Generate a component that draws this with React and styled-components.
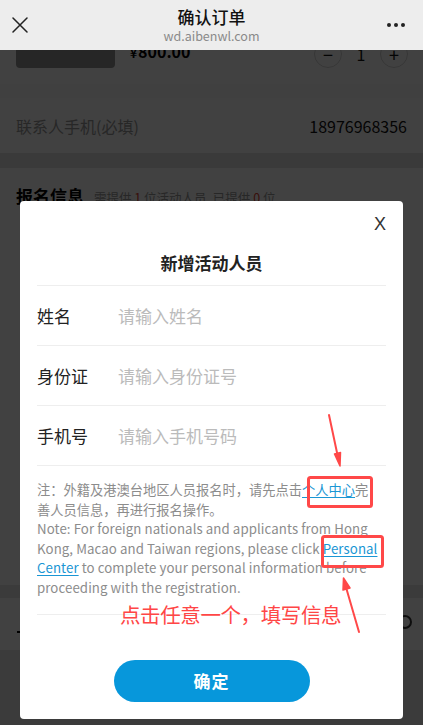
import React from "react";
import styled, { createGlobalStyle } from "styled-components";

const GlobalStyle = createGlobalStyle`
  html, body { margin: 0; padding: 0; background: #3e3e3e; }
  body { font-family: "Noto Sans CJK SC", "Noto Sans", sans-serif; }
  * { box-sizing: border-box; }
`;

const Screen = styled.div`
  position: relative;
  width: 423px;
  height: 725px;
  display: flex;
  flex-direction: column;
  overflow: hidden;
`;

const NavBar = styled.div`
  height: 50px;
  flex: none;
  background: #ededed;
  display: grid;
  grid-template-columns: 50px 1fr 50px;
  align-items: center;
`;

const NavIcon = styled.div`
  display: flex;
  align-items: center;
  justify-content: ${(p) => (p.$right ? "flex-end" : "flex-start")};
  padding: ${(p) => (p.$right ? "0 17px 0 0" : "0 0 0 12px")};
  color: #222;
`;

const NavTitle = styled.div`
  display: flex;
  flex-direction: column;
  align-items: center;
`;

const TitleText = styled.div`
  font-size: 17px;
  font-weight: 500;
  line-height: 20px;
  color: #111;
  margin-top: 1px;
`;

const UrlText = styled.div`
  font-size: 12.5px;
  line-height: 16px;
  color: #8a8a8a;
  margin-top: 1px;
`;

const Content = styled.div`
  position: relative;
  flex: 1;
  overflow: hidden;
  background: #e8e8e8;
`;

const Page = styled.div`
  margin-top: -50px;
  display: flex;
  flex-direction: column;
`;

const ProductRow = styled.div`
  background: #fff;
  display: flex;
  align-items: flex-end;
  gap: 15px;
  padding: 12px 15px 16px 16px;
`;

const ProductImage = styled.div`
  width: 99px;
  height: 56px;
  border-radius: 4px;
  background: #959595;
  flex: none;
`;

const ProductInfo = styled.div`
  flex: 1;
  display: flex;
  align-items: center;
  justify-content: space-between;
  height: 28px;
`;

const Price = styled.div`
  font-weight: 700;
  font-size: 16px;
  line-height: 20px;
  color: #000;
  align-self: flex-start;
  margin-top: 1px;
  span { font-size: 12px; margin-right: 1px; }
`;

const Stepper = styled.div`
  display: flex;
  align-items: center;
`;

const StepBtn = styled.div`
  width: 28px;
  height: 28px;
  border-radius: 50%;
  border: 1px solid #d5d5d5;
  display: flex;
  align-items: center;
  justify-content: center;
  color: #111;
  font-size: 18px;
  line-height: 1;
`;

const StepValue = styled.div`
  width: 38px;
  text-align: center;
  font-size: 16px;
  color: #111;
`;

const Spacer = styled.div`
  height: ${(p) => p.$h}px;
  background: ${(p) => p.$bg};
`;

const ContactRow = styled.div`
  background: #fff;
  height: 55px;
  display: flex;
  align-items: center;
  justify-content: space-between;
  padding: 0 16px;
  font-size: 16px;
`;

const MutedLabel = styled.span`
  color: #999;
`;

const Phone = styled.span`
  color: #111;
  font-size: 16px;
`;

const Section = styled.div`
  background: #fff;
  height: 417px;
  padding: 18px 16px;
`;

const SectionHead = styled.div`
  display: flex;
  align-items: baseline;
  gap: 10px;
  line-height: 20px;
`;

const SectionTitle = styled.span`
  font-size: 17px;
  font-weight: 700;
  color: #000;
`;

const SectionSub = styled.span`
  font-size: 12.5px;
  color: #999;
  em { font-style: normal; color: #e0412f; }
`;

const BottomRow = styled.div`
  background: #fff;
  height: 52px;
  display: flex;
  align-items: center;
  justify-content: space-between;
  padding: 0 11px 0 17px;
  color: #000;
`;

const Dash = styled.span`
  width: 4px;
  height: 2px;
  background: #000;
  margin-top: 16px;
`;

const RingIcon = styled.span`
  width: 14px;
  height: 14px;
  border-radius: 50%;
  border: 2px solid #333;
  margin-top: -4px;
`;

const Overlay = styled.div`
  position: absolute;
  inset: 0;
  background: rgba(0, 0, 0, 0.745);
  display: flex;
  justify-content: center;
  align-items: flex-start;
  padding-top: 151px;
`;

const Modal = styled.div`
  position: relative;
  width: 383px;
  background: #fff;
  border-radius: 4px;
  display: flex;
  flex-direction: column;
  padding: 0 17px 17px;
`;

const CloseBtn = styled.div`
  position: absolute;
  top: 12px;
  right: 17px;
  font-family: "Liberation Sans", Arial, sans-serif;
  font-size: 18px;
  color: #333;
  line-height: 22px;
`;

const ModalTitle = styled.div`
  padding: 50px 0 10px;
  text-align: center;
  font-size: 17px;
  font-weight: 700;
  color: #222;
  line-height: 24px;
  border-bottom: 1px solid #eee;
`;

const FieldRow = styled.div`
  height: 60px;
  display: flex;
  align-items: center;
  border-bottom: 1px solid #eee;
  font-size: 17px;
`;

const FieldLabel = styled.div`
  width: 81px;
  color: #222;
  flex: none;
`;

const FieldInput = styled.input`
  flex: 1;
  min-width: 0;
  border: none;
  outline: none;
  font: inherit;
  font-size: 17px;
  color: #222;
  padding: 0;
  background: transparent;
  &::placeholder { color: #bbb; }
`;

const Note = styled.div`
  padding: 14px 4px 16px 0;
  font-size: 13.25px;
  line-height: 19.6px;
  color: #8c8c8c;
  white-space: nowrap;
  border-bottom: 1px solid #eee;
`;

const EnText = styled.span`
  letter-spacing: 0.08px;
`;

const Link = styled.a`
  color: #1a96d4;
  text-decoration: underline;
  text-underline-offset: 2px;
`;

const ConfirmBtn = styled.button`
  align-self: center;
  margin-top: 45px;
  width: 196px;
  height: 42px;
  border: none;
  border-radius: 21px;
  background: #0797db;
  color: #fff;
  font: inherit;
  font-size: 17px;
  font-weight: 700;
  letter-spacing: 1px;
`;

const Annotation = styled.svg`
  position: absolute;
  left: 0;
  top: 0;
  pointer-events: none;
`;

const AnnotationText = styled.div`
  position: absolute;
  left: 120px;
  top: 601px;
  font-size: 20.5px;
  line-height: 26px;
  color: #ff4646;
  letter-spacing: -0.4px;
`;

function CloseIcon() {
  return (
    <svg width="16" height="16" viewBox="0 0 16 16">
      <path d="M1 1 L15 15 M15 1 L1 15" stroke="#222" strokeWidth="1.5" strokeLinecap="round" />
    </svg>
  );
}

function MoreIcon() {
  return (
    <svg width="20" height="6" viewBox="0 0 20 6">
      <circle cx="3" cy="3" r="2" fill="#222" />
      <circle cx="10" cy="3" r="2" fill="#222" />
      <circle cx="17" cy="3" r="2" fill="#222" />
    </svg>
  );
}

export default function App() {
  return (
    <>
      <GlobalStyle />
      <Screen>
        <NavBar>
          <NavIcon>
            <CloseIcon />
          </NavIcon>
          <NavTitle>
            <TitleText>确认订单</TitleText>
            <UrlText>wd.aibenwl.com</UrlText>
          </NavTitle>
          <NavIcon $right>
            <MoreIcon />
          </NavIcon>
        </NavBar>
        <Content>
          <Page>
            <ProductRow>
              <ProductImage />
              <ProductInfo>
                <Price>
                  <span>¥</span>800.00
                </Price>
                <Stepper>
                  <StepBtn>−</StepBtn>
                  <StepValue>1</StepValue>
                  <StepBtn>+</StepBtn>
                </Stepper>
              </ProductInfo>
            </ProductRow>
            <Spacer $h={14} $bg="#fafafa" />
            <ContactRow>
              <MutedLabel>联系人手机(必填)</MutedLabel>
              <Phone>18976968356</Phone>
            </ContactRow>
            <Spacer $h={15} $bg="#e4e4e4" />
            <Section>
              <SectionHead>
                <SectionTitle>报名信息</SectionTitle>
                <SectionSub>
                  需提供 <em>1</em> 位活动人员 ,已提供 <em>0</em> 位
                </SectionSub>
              </SectionHead>
            </Section>
            <Spacer $h={13} $bg="#e8e8e8" />
            <BottomRow>
              <Dash />
              <RingIcon />
            </BottomRow>
          </Page>
          <Overlay>
            <Modal>
              <CloseBtn>X</CloseBtn>
              <ModalTitle>新增活动人员</ModalTitle>
              <FieldRow>
                <FieldLabel>姓名</FieldLabel>
                <FieldInput placeholder="请输入姓名" />
              </FieldRow>
              <FieldRow>
                <FieldLabel>身份证</FieldLabel>
                <FieldInput placeholder="请输入身份证号" />
              </FieldRow>
              <FieldRow>
                <FieldLabel>手机号</FieldLabel>
                <FieldInput placeholder="请输入手机号码" />
              </FieldRow>
              <Note>
                注：外籍及港澳台地区人员报名时，请先点击<Link>个人中心</Link>完
                <br />
                善人员信息，再进行报名操作。
                <br />
                <EnText>
                  Note: For foreign nationals and applicants from Hong
                  <br />
                  Kong, Macao and Taiwan regions, please click{" "}
                  <Link>
                    Personal
                    <br />
                    Center
                  </Link>{" "}
                  to complete your personal information before
                  <br />
                  proceeding with the registration.
                </EnText>
              </Note>
              <ConfirmBtn>确定</ConfirmBtn>
            </Modal>
          </Overlay>
        </Content>
        <Annotation width="423" height="725" viewBox="0 0 423 725">
          <rect x="308.5" y="477.5" width="63" height="29" rx="2" fill="none" stroke="#ff4848" strokeWidth="3" />
          <rect x="322.5" y="536.5" width="60" height="30" rx="2" fill="none" stroke="#ff4848" strokeWidth="3" />
          <path d="M329 415 L337.5 455" stroke="#ff4848" strokeWidth="2" strokeLinecap="round" />
          <path d="M334.5 454 L340 466 L340.5 452.5 Z" fill="#ff4848" stroke="#ff4848" strokeWidth="1.5" strokeLinejoin="round" />
          <path d="M359 632 L346.5 589" stroke="#ff4848" strokeWidth="2" strokeLinecap="round" />
          <path d="M343 590 L343.5 578 L350 588 Z" fill="#ff4848" stroke="#ff4848" strokeWidth="1.5" strokeLinejoin="round" />
        </Annotation>
        <AnnotationText>点击任意一个，填写信息</AnnotationText>
      </Screen>
    </>
  );
}
